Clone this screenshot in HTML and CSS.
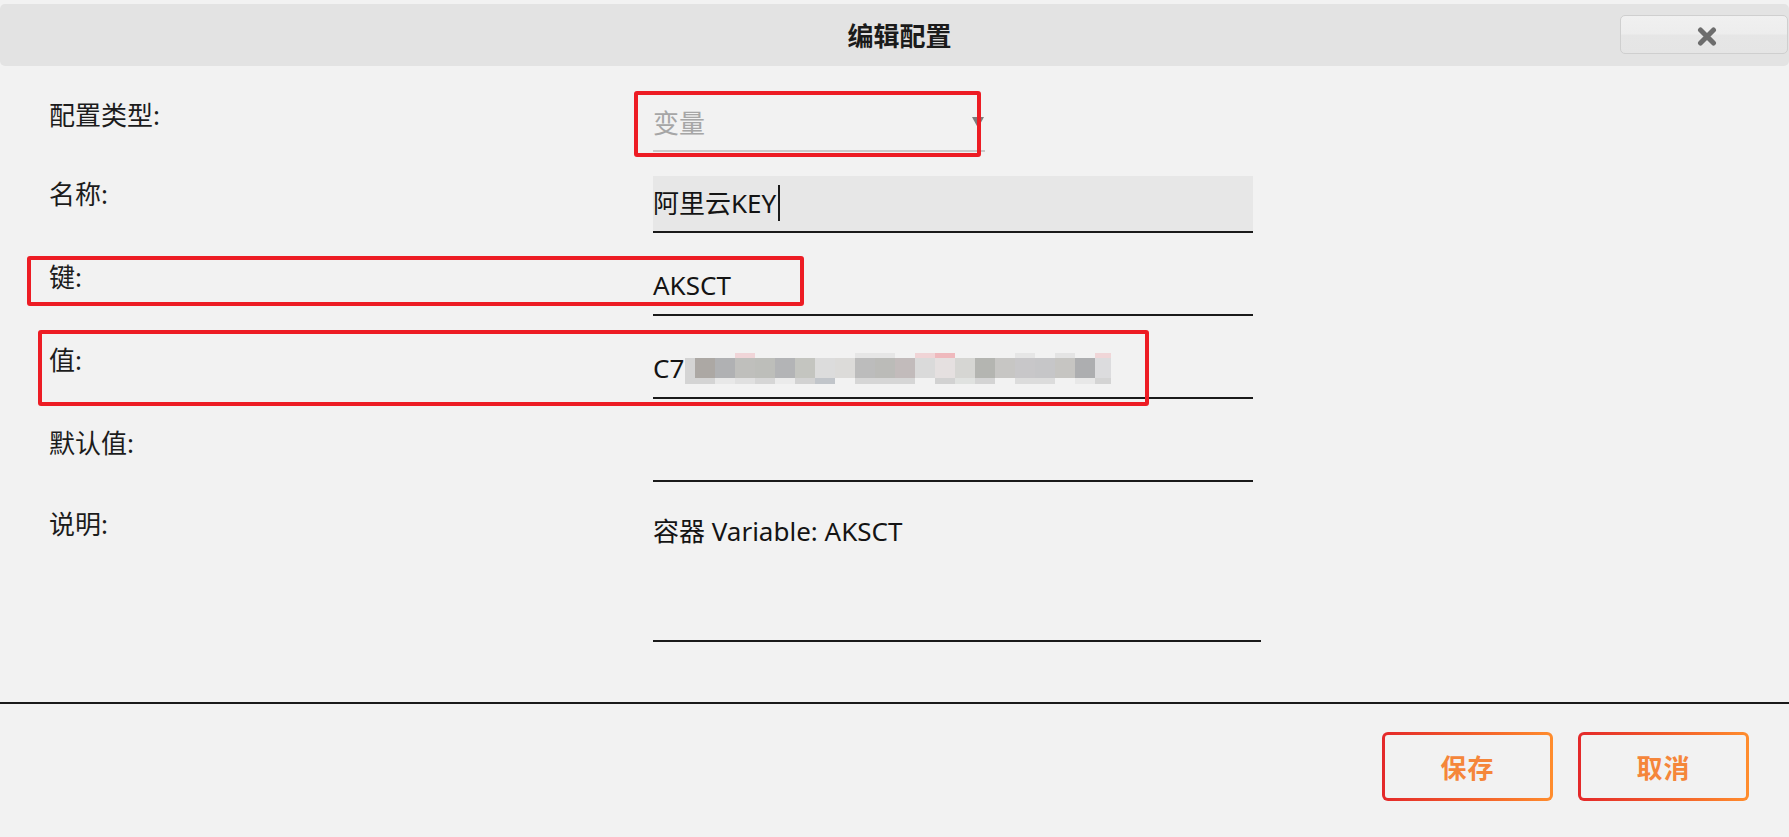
FILE: index.html
```html
<!DOCTYPE html>
<html lang="zh-CN">
<head>
<meta charset="utf-8">
<title>编辑配置</title>
<link rel="stylesheet" href="styles.css">
</head>
<body>
<div class="dialog">
  <header class="dlg-header">
    <h1 class="dlg-title">编辑配置</h1>
    <button class="close-btn" type="button" aria-label="关闭">
      <svg class="close-icon" width="20" height="19" viewBox="0 0 20 19" aria-hidden="true">
        <path d="M3.5 3 L16.5 16 M16.5 3 L3.5 16" stroke="#6d6d6d" stroke-width="5" stroke-linecap="round" fill="none"/>
      </svg>
    </button>
  </header>

  <div class="form">
    <div class="row row-type">
      <div class="lbl lbl-type">配置类型:</div>
      <div class="select">
        <span class="select-value">变量</span>
        <span class="select-arrow"></span>
      </div>
    </div>

    <div class="row row-name">
      <div class="lbl">名称:</div>
      <div class="field field-focus">阿里云KEY<span class="caret"></span></div>
    </div>

    <div class="row">
      <div class="lbl">键:</div>
      <div class="field">AKSCT</div>
    </div>

    <div class="row">
      <div class="lbl">值:</div>
      <div class="field">C7<svg class="mosaic" width="426" height="31" viewBox="0 0 426 31" aria-hidden="true">
          <g>
            <rect x="50" y="0" width="20" height="5" fill="#f0d5d8"/>
            <rect x="170" y="0" width="40" height="5" fill="#e6e6e6"/>
            <rect x="230" y="0" width="20" height="5" fill="#f0d4d6"/>
            <rect x="250" y="0" width="20" height="5" fill="#efb9bd"/>
            <rect x="330" y="0" width="20" height="5" fill="#e6e6e6"/>
            <rect x="370" y="0" width="20" height="5" fill="#e4e4e4"/>
            <rect x="410" y="0" width="16" height="5" fill="#f0d6d8"/>
          </g>
          <g>
            <rect x="0" y="5" width="10" height="20" fill="#d4d4d4"/>
            <rect x="10" y="5" width="20" height="20" fill="#aca8a4"/>
            <rect x="30" y="5" width="20" height="20" fill="#b0b1b3"/>
            <rect x="50" y="5" width="20" height="20" fill="#bfbfbc"/>
            <rect x="70" y="5" width="20" height="20" fill="#bdbeba"/>
            <rect x="90" y="5" width="20" height="20" fill="#b3b4b6"/>
            <rect x="110" y="5" width="20" height="20" fill="#c4c5c0"/>
            <rect x="130" y="5" width="20" height="20" fill="#dcdcdc"/>
            <rect x="150" y="5" width="20" height="20" fill="#dcdbd9"/>
            <rect x="170" y="5" width="20" height="20" fill="#bcbcbc"/>
            <rect x="190" y="5" width="20" height="20" fill="#bbbbb8"/>
            <rect x="210" y="5" width="20" height="20" fill="#c2bbbb"/>
            <rect x="230" y="5" width="20" height="20" fill="#dadada"/>
            <rect x="250" y="5" width="20" height="20" fill="#e5e0e0"/>
            <rect x="270" y="5" width="20" height="20" fill="#d6d6d3"/>
            <rect x="290" y="5" width="20" height="20" fill="#b4b5b1"/>
            <rect x="310" y="5" width="20" height="20" fill="#c7c6c4"/>
            <rect x="330" y="5" width="20" height="20" fill="#c8c7c9"/>
            <rect x="350" y="5" width="20" height="20" fill="#c6c6c8"/>
            <rect x="370" y="5" width="20" height="20" fill="#c6c5c2"/>
            <rect x="390" y="5" width="20" height="20" fill="#adaeb0"/>
            <rect x="410" y="5" width="16" height="20" fill="#dcdcde"/>
          </g>
          <g>
            <rect x="0" y="25" width="30" height="6" fill="#d4d4d4"/>
            <rect x="30" y="25" width="20" height="6" fill="#e8e8e8"/>
            <rect x="50" y="25" width="20" height="6" fill="#e0e0e0"/>
            <rect x="70" y="25" width="20" height="6" fill="#d6d6d6"/>
            <rect x="90" y="25" width="20" height="6" fill="#ebebeb"/>
            <rect x="110" y="25" width="20" height="6" fill="#d2d2d2"/>
            <rect x="130" y="25" width="20" height="6" fill="#c1c5ca"/>
            <rect x="170" y="25" width="60" height="6" fill="#d6d6d6"/>
            <rect x="250" y="25" width="20" height="6" fill="#d2d2d2"/>
            <rect x="270" y="25" width="20" height="6" fill="#e0e2e0"/>
            <rect x="290" y="25" width="20" height="6" fill="#d4d4d4"/>
            <rect x="330" y="25" width="40" height="6" fill="#dcdcdc"/>
            <rect x="390" y="25" width="20" height="6" fill="#e8e8e8"/>
            <rect x="410" y="25" width="16" height="6" fill="#d4d4d4"/>
          </g>
        </svg></div>
    </div>

    <div class="row">
      <div class="lbl">默认值:</div>
      <div class="field"></div>
    </div>

    <div class="row">
      <div class="lbl lbl-area">说明:</div>
      <div class="field field-area">容器 Variable: AKSCT</div>
    </div>
  </div>

  <footer class="dlg-footer">
    <button class="btn" type="button">保存</button>
    <button class="btn" type="button">取消</button>
  </footer>

  <div class="mark mark-type"></div>
  <div class="mark mark-key"></div>
  <div class="mark mark-value"></div>
</div>
</body>
</html>
```

FILE: styles.css
```css
* {
  box-sizing: border-box;
}

html,
body {
  margin: 0;
  padding: 0;
}

body {
  width: 1789px;
  height: 837px;
  overflow: hidden;
  background: #f2f2f2;
  color: #1c1c1c;
  font-family: "Noto Sans", "Noto Sans CJK SC", sans-serif;
}

.dialog {
  position: relative;
  padding-top: 4px;
}

/* header */
.dlg-header {
  height: 62px;
  background: #e3e3e3;
  border-radius: 5px;
  display: grid;
  grid-template-columns: 1fr auto 1fr;
  align-items: center;
  padding-left: 11px;
  padding-right: 1px;
}

.dlg-title {
  grid-column: 2;
  margin: 0;
  font-family: "Noto Sans CJK SC", sans-serif;
  font-size: 26px;
  line-height: 36px;
  font-weight: 700;
  color: #1b1b1b;
}

.close-btn {
  grid-column: 3;
  justify-self: end;
  width: 168px;
  height: 39px;
  margin-top: -1px;
  padding: 3px 0 0 5px;
  border: 1px solid #cfcfcf;
  border-radius: 5px;
  background: linear-gradient(#f0f0f0 0%, #ededed 48%, #e6e6e6 52%, #e5e5e5 100%);
  display: flex;
  align-items: center;
  justify-content: center;
}

.close-icon {
  display: block;
}

/* form */
.form {
  padding: 27px 0 0 49px;
}

.row {
  display: flex;
  align-items: flex-start;
  margin-top: 26px;
}

.row-type {
  margin-top: 0;
}

.row-name {
  margin-top: 24px;
}

.lbl {
  width: 604px;
  flex: none;
  font-size: 26px;
  line-height: 36px;
  color: #1c1c1c;
}

.lbl-type {
  margin-top: 4px;
}

.lbl-area {
  margin-top: -2px;
}

.select {
  width: 332px;
  height: 59px;
  padding-top: 12px;
  border-bottom: 2px solid #c9c9c9;
  display: flex;
  justify-content: space-between;
  align-items: flex-start;
  font-size: 26px;
  line-height: 36px;
  color: #a6a6a6;
}

.select-arrow {
  width: 0;
  height: 0;
  margin-top: 12px;
  margin-right: 1px;
  border-left: 6px solid transparent;
  border-right: 6px solid transparent;
  border-top: 11px solid #7c7c7c;
}

.field {
  width: 600px;
  height: 57px;
  padding-top: 8px;
  border-bottom: 2px solid #1a1a1a;
  font-size: 26px;
  line-height: 36px;
  color: #141414;
  white-space: nowrap;
}

.field-focus {
  background: #e7e7e7;
  padding-top: 9px;
}

.caret {
  display: inline-block;
  width: 2px;
  height: 36px;
  margin-left: 2px;
  vertical-align: top;
  background: #1a1a1a;
}

.mosaic {
  vertical-align: -6px;
  margin-left: 1px;
}

.field-area {
  width: 608px;
  height: 134px;
  padding-top: 5px;
}

/* footer */
.dlg-footer {
  margin-top: 60px;
  border-top: 2px solid #1a1a1a;
  padding: 28px 40px 0 0;
  display: flex;
  justify-content: flex-end;
  gap: 25px;
}

.btn {
  width: 171px;
  height: 69px;
  padding: 0;
  border: 3px solid transparent;
  border-radius: 6px;
  background:
    linear-gradient(#f2f2f2, #f2f2f2) padding-box,
    linear-gradient(90deg, #e4282a 0%, #f0552a 45%, #ff8d2d 100%) border-box;
  font-family: "Noto Sans CJK SC", sans-serif;
  font-size: 26px;
  font-weight: 700;
  letter-spacing: 1px;
  color: #f5863a;
}

/* annotation boxes */
.mark {
  position: absolute;
  border: 4px solid #ed1c24;
  border-radius: 3px;
  pointer-events: none;
}

.mark-type {
  left: 634px;
  top: 91px;
  width: 347px;
  height: 66px;
}

.mark-key {
  left: 27px;
  top: 256px;
  width: 777px;
  height: 50px;
}

.mark-value {
  left: 38px;
  top: 330px;
  width: 1111px;
  height: 76px;
}
```
